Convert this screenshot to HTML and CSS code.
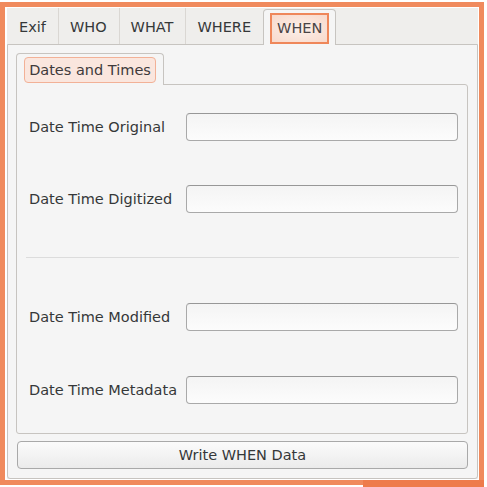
FILE: index.html
```html
<!DOCTYPE html>
<html>
<head>
<meta charset="utf-8">
<link rel="stylesheet" href="styles.css">
</head>
<body>
<div class="frame">
  <div class="window">
    <div class="tabbar">
      <div class="tab">Exif</div>
      <div class="tab">WHO</div>
      <div class="tab">WHAT</div>
      <div class="tab">WHERE</div>
      <div class="tab tab-active"><span class="focus">WHEN</span></div>
    </div>
    <div class="pane">
      <div class="subtabs">
        <div class="subtab"><span class="subfocus">Dates and Times</span></div>
      </div>
      <div class="subpane">
        <div class="row"><label class="lbl">Date Time Original</label><input class="field" type="text"></div>
        <div class="row row-2"><label class="lbl">Date Time Digitized</label><input class="field" type="text"></div>
        <div class="sep"></div>
        <div class="row row-3"><label class="lbl">Date Time Modified</label><input class="field" type="text"></div>
        <div class="row row-3"><label class="lbl">Date Time Metadata</label><input class="field" type="text"></div>
      </div>
      <button class="btn">Write WHEN Data</button>
    </div>
  </div>
</div>
</body>
</html>
```
FILE: styles.css
```css
* { box-sizing: border-box; }
html, body { margin: 0; padding: 0; background: #ffffff; }
body {
  font-family: "DejaVu Sans", "Noto Sans", sans-serif;
  font-size: 14.5px;
  color: #353839;
  width: 487px;
  height: 487px;
  overflow: hidden;
  position: relative;
}
.frame {
  margin-top: 2px;
  width: 484px;
  height: 483px;
  border: 5px solid #f08a5d;
  padding: 1px 1px 1px 2px;
  position: relative;
}
.frame::after {
  content: "";
  position: absolute;
  left: 358px;
  top: 473px;
  width: 121px;
  height: 7px;
  background: #ee7b4b;
}
.window {
  width: 471px;
  height: 471px;
  display: flex;
  flex-direction: column;
  background: #efeeec;
}
.tabbar {
  display: flex;
  height: 36px;
  padding-left: 1px;
  align-items: stretch;
  position: relative;
  z-index: 1;
}
.tab {
  display: flex;
  align-items: center;
  padding: 3px 12px 0 11px;
  border-right: 1px solid #dad7d3;
  line-height: 1;
}
.tab:nth-child(4) { border-right: none; }
.tab-active {
  margin-top: 1px;
  margin-bottom: -1px;
  padding: 0 6px;
  background: #f5f5f5;
  border: 1px solid #c7c4c0;
  border-bottom: none;
  border-radius: 4px 4px 0 0;
}
.focus {
  display: flex;
  align-items: center;
  height: 31px;
  padding: 0 5px;
  margin-top: 1px;
  border: 2px solid #ef875a;
  background: radial-gradient(ellipse at center, #fcf0ea 0%, #f8d9cb 100%);
  color: #4a4446;
}
.pane {
  flex: 1;
  background: #f5f5f5;
  border: 1px solid #c7c4c0;
  border-radius: 0 0 3px 3px;
  padding: 8px 9px 9px 8px;
  display: flex;
  flex-direction: column;
}
.subtabs {
  display: flex;
  height: 31px;
  position: relative;
  z-index: 1;
}
.subtab {
  width: 148px;
  border: 1px solid #c7c4c0;
  border-bottom: none;
  border-radius: 4px 4px 0 0;
  background: #f5f5f5;
  padding: 3px 7px 0 7px;
  margin-bottom: -1px;
  height: 32px;
}
.subfocus {
  display: flex;
  align-items: center;
  justify-content: center;
  height: 26px;
  border: 1px solid #f2b197;
  border-radius: 4px;
  background: #fae6de;
  color: #3f3a3b;
  white-space: nowrap;
}
.subpane {
  height: 350px;
  border: 1px solid #c7c4c0;
  border-radius: 0 3px 3px 3px;
  background: #f5f5f5;
  padding: 28px 9px 0 12px;
  display: flex;
  flex-direction: column;
}
.row {
  display: flex;
  align-items: center;
  height: 28px;
  flex: none;
}
.row-2 { margin-top: 44px; }
.row-3 { margin-top: 45px; }
.lbl {
  width: 157px;
  flex: none;
  white-space: nowrap;
}
.field {
  flex: 1;
  min-width: 0;
  height: 28px;
  margin: 0;
  border: 1px solid #a9a9a9;
  border-top-color: #979797;
  border-radius: 4px;
  background: linear-gradient(#f4f4f4, #fcfcfc);
  outline: none;
  font: inherit;
}
.sep {
  flex: none;
  height: 1px;
  background: #dcdcdc;
  margin: 44px -1px 0 -3px;
}
.btn {
  margin: 7px 0 0 1px;
  width: 451px;
  height: 28px;
  border: 1px solid #a9a9a9;
  border-radius: 4px;
  background: linear-gradient(#fbfbfb, #ebebeb);
  font: inherit;
  color: #353839;
  padding: 0;
}
```
